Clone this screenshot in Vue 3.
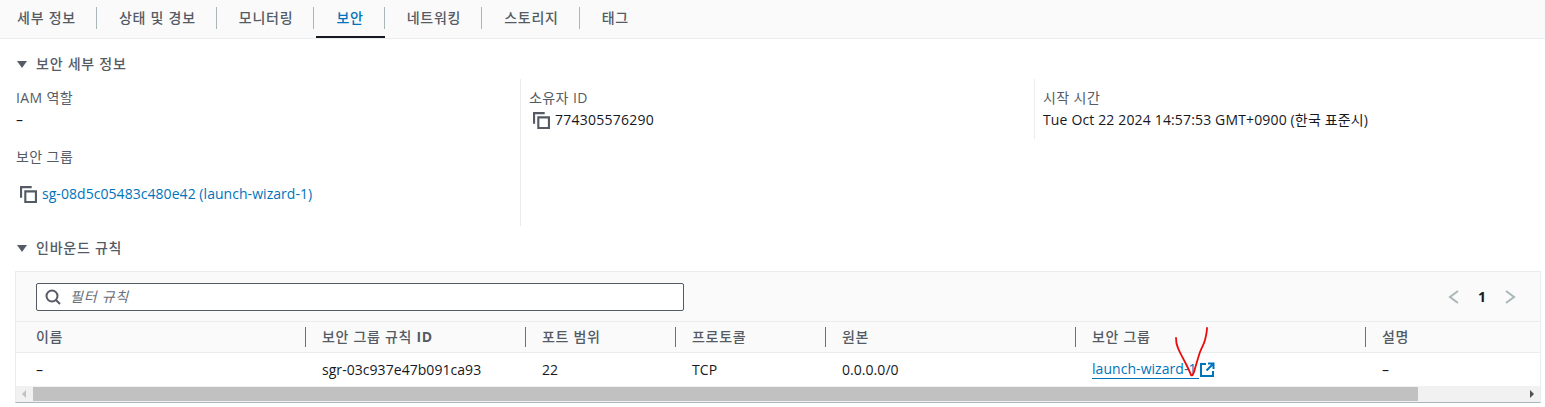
<template>
  <div class="page">
    <div class="tabs">
      <div
        v-for="(tab, index) in tabs"
        :key="tab"
        class="tab"
        :class="{ active: index === 3, first: index === 0 }"
      >
        <span class="tab-label">{{ tab }}</span>
      </div>
    </div>

    <section class="details">
      <h3 class="section-title"><span class="caret"></span>보안 세부 정보</h3>
      <div class="detail-grid">
        <div class="detail-col first">
          <div class="label">IAM 역할</div>
          <div class="value dash">–</div>
          <div class="label group-label">보안 그룹</div>
          <div class="value group-link">
            <svg class="copy" viewBox="0 0 16 16"><path d="M1 11V1h10M5 5h10v10H5z" /></svg>
            <a class="link">sg-08d5c05483c480e42 (launch-wizard-1)</a>
          </div>
        </div>
        <div class="detail-col second">
          <div class="label">소유자 ID</div>
          <div class="value">
            <svg class="copy" viewBox="0 0 16 16"><path d="M1 11V1h10M5 5h10v10H5z" /></svg>
            <span>774305576290</span>
          </div>
        </div>
        <div class="detail-col third">
          <div class="label">시작 시간</div>
          <div class="value">Tue Oct 22 2024 14:57:53 GMT+0900 (한국 표준시)</div>
        </div>
      </div>
    </section>

    <section class="rules">
      <h3 class="section-title"><span class="caret"></span>인바운드 규칙</h3>
      <div class="table-box">
        <div class="toolbar">
          <div class="filter">
            <svg class="search" viewBox="0 0 16 16"><circle cx="7" cy="7" r="5.5" /><path d="M11 11l4 4" /></svg>
            <span class="placeholder">필터 규칙</span>
          </div>
          <div class="pager">
            <svg class="chev" viewBox="0 0 16 16"><path d="M12 2L4 8l8 6" /></svg>
            <span class="page-num">1</span>
            <svg class="chev" viewBox="0 0 16 16"><path d="M4 2l8 6-8 6" /></svg>
          </div>
        </div>
        <div class="row head">
          <div v-for="(col, index) in columns" :key="col" class="cell" :class="{ sep: index > 0 }">
            <span>{{ col.replace(' ID', '') }}<b v-if="col.endsWith('ID')"> ID</b></span>
          </div>
        </div>
        <div class="row body">
          <div class="cell">–</div>
          <div class="cell">sgr-03c937e47b091ca93</div>
          <div class="cell">22</div>
          <div class="cell">TCP</div>
          <div class="cell">0.0.0.0/0</div>
          <div class="cell">
            <a class="link underlined">launch-wizard-1</a>
            <svg class="external" viewBox="0 0 16 16">
              <path d="M7 2H2v12h12V9" />
              <path d="M9 1.500h5.500V7M14 2L7.500 8.500" />
            </svg>
          </div>
          <div class="cell">–</div>
        </div>
        <div class="scrollbar">
          <span class="arrow left"></span>
          <div class="thumb"></div>
          <span class="arrow right"></span>
        </div>
      </div>
    </section>

    <svg class="check-mark" viewBox="0 0 40 52">
      <path d="M6 13C6 18 7 21 8 23C10 28 13 33 16 39C18 43 20 47 21 50C22 51 23 50 24 47C26 40 28 33 30 27C32 22 34 19 35 15C36 11 37 7 37 3" />
    </svg>
  </div>
</template>

<script setup>
const tabs = ['세부 정보', '상태 및 경보', '모니터링', '보안', '네트워킹', '스토리지', '태그']
const columns = ['이름', '보안 그룹 규칙 ID', '포트 범위', '프로토콜', '원본', '보안 그룹', '설명']
</script>

<style>
html,
body {
  margin: 0;
  background: #fff;
}
</style>

<style scoped>
.page {
  position: relative;
  width: 1545px;
  height: 407px;
  overflow: hidden;
  font-family: "Open Sans", "Noto Sans CJK KR", sans-serif;
  font-size: 14px;
  line-height: 20px;
  letter-spacing: 0.05px;
  color: #16191f;
}

/* 탭 */
.tabs {
  display: flex;
  height: 38px;
  background: #fafafa;
  border-bottom: 1px solid #eaeded;
}

.tab {
  display: flex;
  align-items: center;
  height: 38px;
  padding: 0 21px 2px 22px;
  box-sizing: border-box;
  position: relative;
  color: #545b64;
  font-weight: 500;
  letter-spacing: 0.75px;
  white-space: nowrap;
}

.tab.first {
  padding-left: 17px;
}

.tab:not(:last-child)::after {
  content: '';
  position: absolute;
  right: 0;
  top: 7px;
  height: 22px;
  width: 1px;
  background: #aab7b8;
}

.tab.active {
  color: #0073bb;
}

.tab.active::before {
  content: '';
  position: absolute;
  left: 2px;
  right: 0;
  bottom: 0;
  height: 2px;
  background: #16191f;
}

.section-title {
  display: flex;
  align-items: center;
  margin: 0;
  font-size: 14px;
  line-height: 20px;
  font-weight: 500;
  letter-spacing: 0.75px;
  color: #545b64;
}

.caret {
  width: 0;
  height: 0;
  margin: 1px 9px 0 1px;
  border-left: 5px solid transparent;
  border-right: 5px solid transparent;
  border-top: 7px solid #545b64;
}

/* 세부 정보 */
.details {
  padding: 15px 16px 0;
}

.detail-grid {
  display: grid;
  grid-template-columns: 504px 514px 1fr;
  margin-top: 5px;
  height: 147px;
}

.detail-col {
  padding-top: 9px;
  box-sizing: border-box;
}

.detail-col.second,
.detail-col.third {
  border-left: 1px solid #eaeded;
  padding-left: 8px;
}

.detail-col.third {
  height: 60px;
}

.label {
  color: #545b64;
  letter-spacing: 0.4px;
  margin-bottom: 2px;
  height: 20px;
}

.value {
  display: flex;
  align-items: center;
  gap: 4px;
  height: 20px;
  white-space: nowrap;
}

.third .value {
  letter-spacing: 0.15px;
}

.second .value {
  padding-left: 4px;
  gap: 5px;
  letter-spacing: 0.25px;
}

.dash {
  margin-top: 1px;
}

.group-label {
  margin-top: 17px;
}

.group-link {
  margin-top: 17px;
  padding-left: 4px;
  gap: 5px;
}

.copy {
  width: 17px;
  height: 17px;
  flex: none;
  fill: none;
  stroke: #545b64;
  stroke-width: 2;
}

.link {
  color: #0073bb;
}

.underlined {
  border-bottom: 1px solid #0073bb;
  line-height: 18px;
  padding-right: 2px;
}

/* 인바운드 규칙 */
.rules {
  padding: 12px 4px 0 15px;
}

.rules .section-title {
  padding-left: 1px;
}

.table-box {
  position: relative;
  margin-top: 13px;
  height: 132px;
  box-sizing: border-box;
  border: 1px solid #eaeded;
  border-bottom: 1px solid #aab7b8;
  background: #fff;
}

.toolbar {
  display: flex;
  align-items: center;
  justify-content: space-between;
  height: 50px;
  padding: 0 22px 0 20px;
  box-sizing: border-box;
  background: #fafafa;
  border-bottom: 1px solid #eaeded;
}

.filter {
  display: flex;
  align-items: center;
  gap: 9px;
  width: 648px;
  height: 28px;
  padding-left: 8px;
  box-sizing: border-box;
  background: #fff;
  border: 1px solid #545b64;
  border-radius: 2px;
}

.search {
  width: 16px;
  height: 16px;
  fill: none;
  stroke: #545b64;
  stroke-width: 2;
}

.placeholder {
  color: #687078;
  font-style: italic;
  letter-spacing: 0.75px;
}

.pager {
  display: flex;
  align-items: center;
  gap: 16px;
}

.chev {
  width: 16px;
  height: 16px;
  fill: none;
  stroke: #aab7b8;
  stroke-width: 2;
}

.page-num {
  font-weight: 700;
}

.row {
  display: grid;
  grid-template-columns: 289px 220px 150px 150px 250px 290px 1fr;
  align-items: center;
}

.row.head {
  height: 31px;
  background: #fafafa;
  border-bottom: 1px solid #eaeded;
  box-sizing: border-box;
  color: #545b64;
  font-weight: 500;
  letter-spacing: 0.7px;
}

.row.body {
  height: 33px;
  box-sizing: border-box;
}

.cell {
  display: flex;
  align-items: center;
  height: 20px;
  padding-left: 20px;
  white-space: nowrap;
}

.head .cell.sep {
  padding-left: 16px;
  border-left: 1px solid #687078;
}

.body .cell:nth-child(n + 2) {
  padding-left: 17px;
}

.external {
  width: 16px;
  height: 16px;
  margin-left: 0;
  fill: none;
  stroke: #0073bb;
  stroke-width: 2;
}

.scrollbar {
  display: flex;
  align-items: center;
  height: 16px;
  background: #f1f1f1;
  position: relative;
}

.thumb {
  position: absolute;
  left: 17px;
  top: 1px;
  width: 1385px;
  height: 14px;
  background: #c1c1c1;
}

.arrow {
  position: absolute;
  top: 4px;
  width: 0;
  height: 0;
  border-top: 4px solid transparent;
  border-bottom: 4px solid transparent;
}

.arrow.left {
  left: 6px;
  border-right: 4px solid #c1c1c1;
}

.arrow.right {
  right: 6px;
  border-left: 4px solid #505050;
}

/* 스크린샷 위에 손으로 그린 체크 표시 */
.check-mark {
  position: absolute;
  left: 1170px;
  top: 325px;
  width: 40px;
  height: 52px;
  fill: none;
  stroke: #ea0b0b;
  stroke-width: 1.8;
  stroke-linecap: round;
}
</style>
